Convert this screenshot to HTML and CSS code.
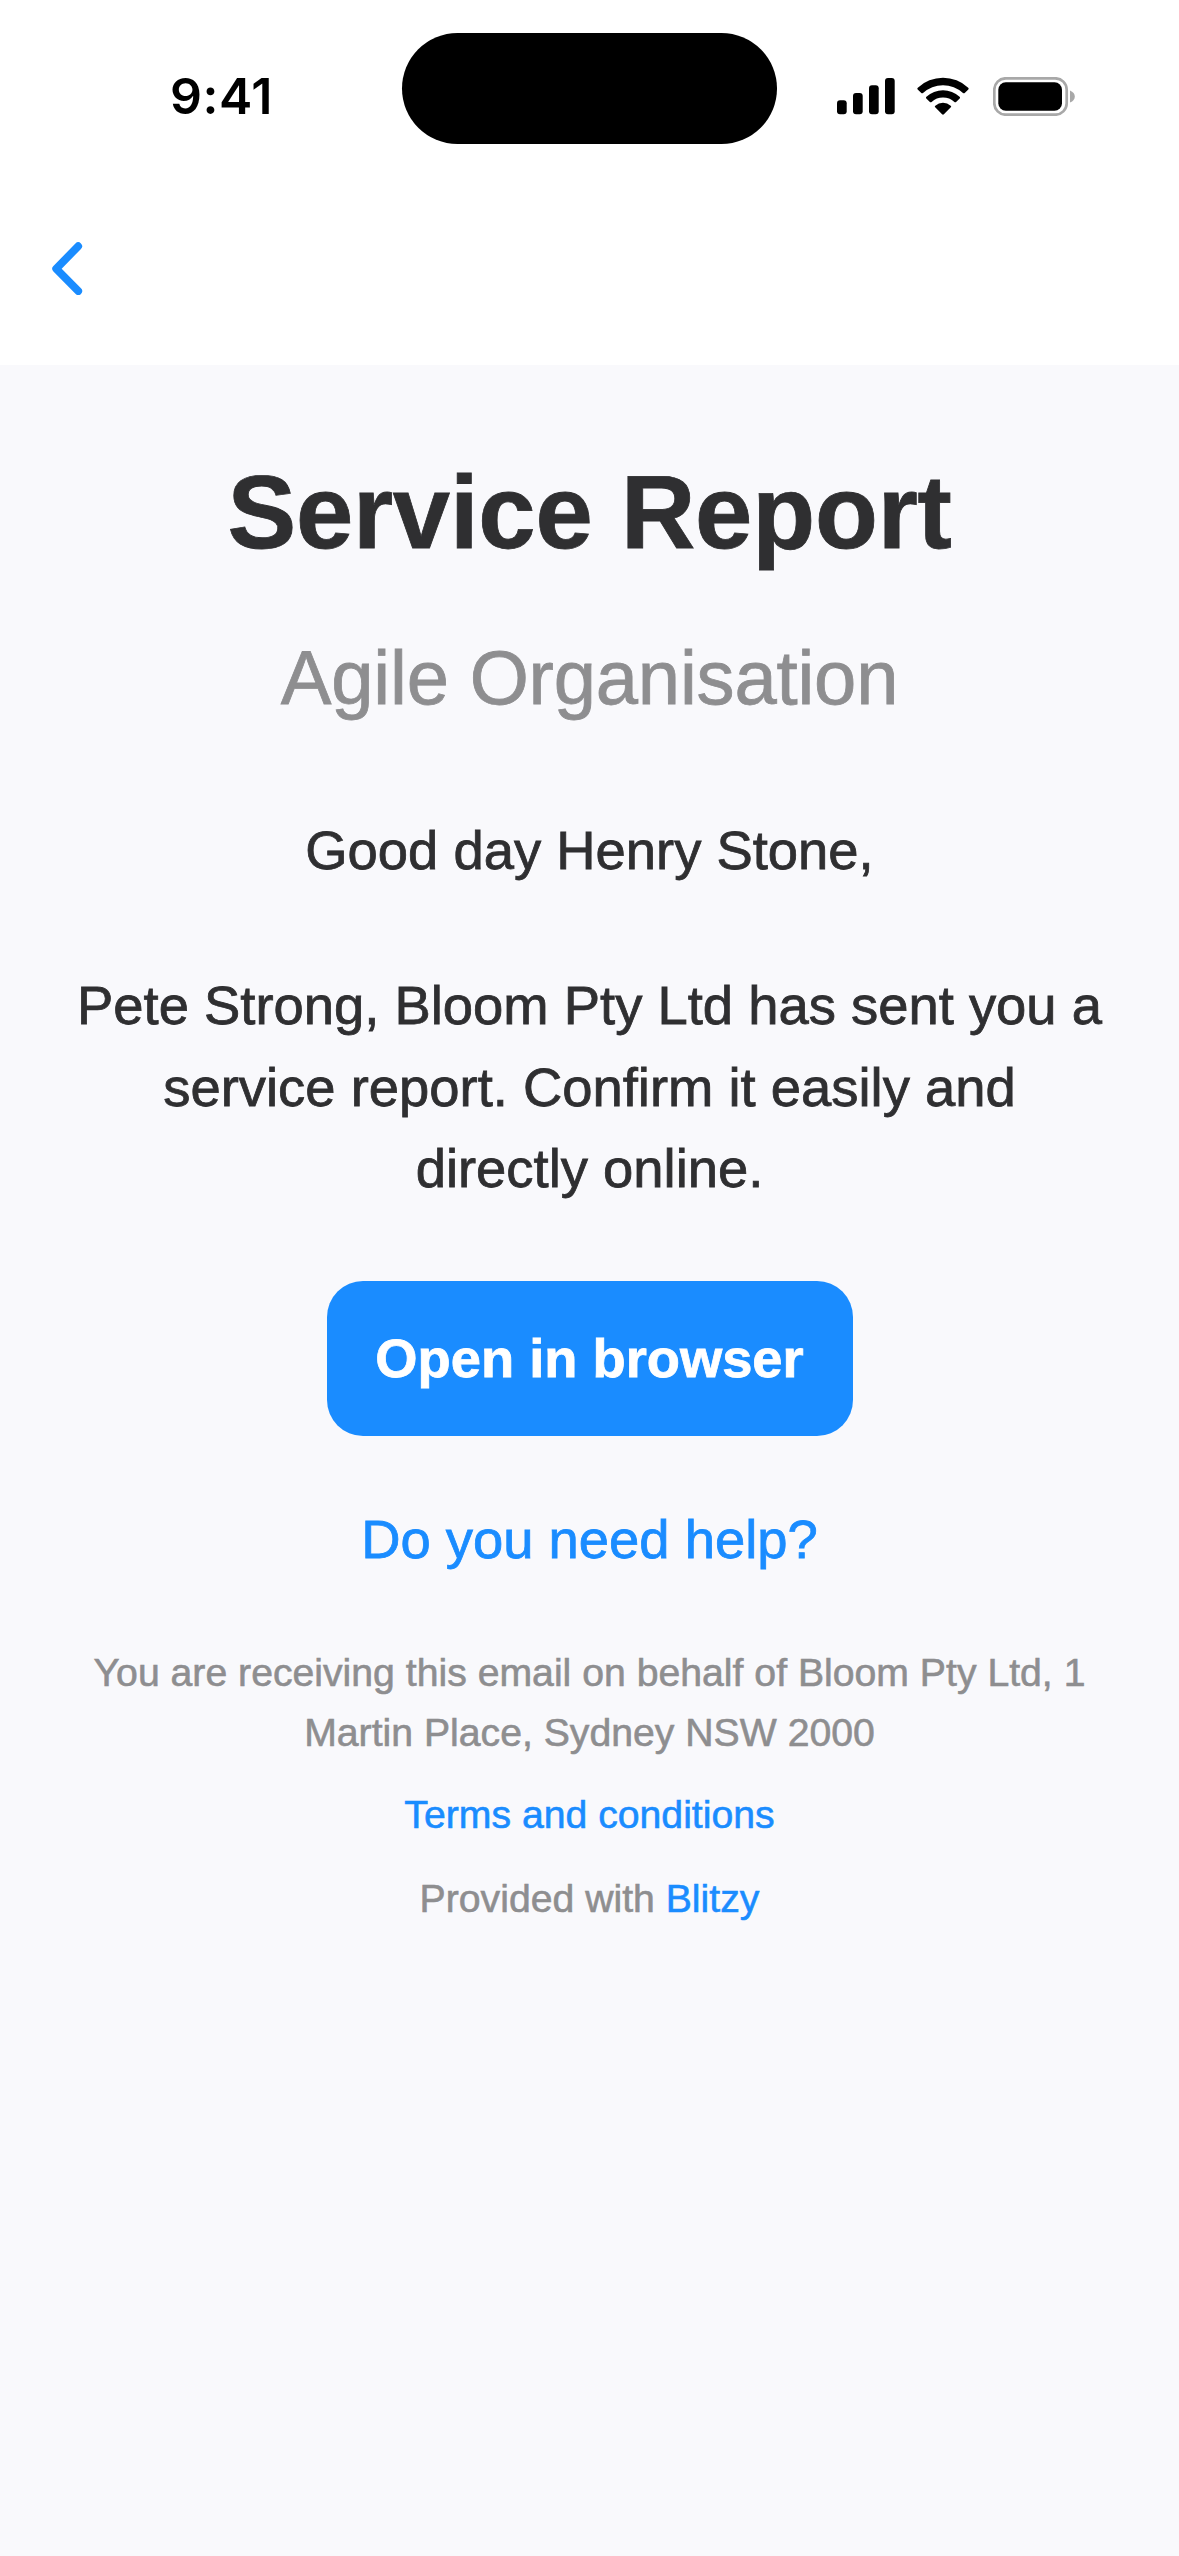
FILE: index.html
```html
<!DOCTYPE html>
<html lang="en">
<head>
<meta charset="utf-8">
<title>Service Report</title>
<link rel="stylesheet" href="styles.css">
</head>
<body>
<header class="top">
  <div class="status">
    <time class="clock">9:41</time>
    <div class="island"></div>
    <div class="indicators">
      <svg class="signal" viewBox="0 0 58 39"><rect x="0" y="23.300" width="9.700" height="14" rx="3"/><rect x="16" y="16" width="9.700" height="21.300" rx="3"/><rect x="32" y="8.300" width="9.700" height="29" rx="3"/><rect x="48" y="1" width="9.700" height="36.300" rx="3"/></svg>
      <svg class="wifi" viewBox="0 0 52 39"><path d="M.7 12.400Q-.1 11.500.8 10.700A37 37 0 0 1 51.200 10.700Q52.100 11.500 51.300 12.400L47.700 16Q46.900 16.700 46 16A29.500 29.500 0 0 0 6 16Q5.100 16.700 4.300 16ZM9.300 21.400Q8.500 20.500 9.400 19.700A24.500 24.500 0 0 1 42.600 19.700Q43.500 20.500 42.700 21.400L39.100 25Q38.300 25.700 37.400 25A16.800 16.800 0 0 0 14.600 25Q13.700 25.700 12.900 25ZM18.200 30.300Q17.400 29.500 18.300 28.700A11.800 11.800 0 0 1 33.700 28.700Q34.600 29.500 33.800 30.300L26.900 37.200Q26 38.100 25.100 37.200Z"/></svg>
      <svg class="battery" viewBox="0 0 82 39"><rect x="1.300" y="1.300" width="72.400" height="36.400" rx="11.500" fill="none" stroke="#a8a8a8" stroke-width="2.700"/><rect x="5.300" y="5.300" width="63.700" height="28.400" rx="7.500"/><path d="M77 13.500q4.800 2 4.800 6t-4.800 6z" fill="#a8a8a8"/></svg>
    </div>
  </div>
  <nav class="nav"><a class="back" href="#" aria-label="Back"><svg viewBox="0 0 32 54"><path d="M27.200 5.200 5.200 27.700l22 22.400"/></svg></a></nav>
</header>
<main class="message">
  <h1 class="title">Service Report</h1>
  <p class="org">Agile Organisation</p>
  <p class="greeting">Good day Henry Stone,</p>
  <p class="body">Pete Strong, Bloom Pty Ltd has sent you a<br>service report. Confirm it easily and<br>directly online.</p>
  <a class="button" href="#">Open in browser</a>
  <a class="help" href="#">Do you need help?</a>
  <footer class="footer">
    <p class="behalf">You are receiving this email on behalf of Bloom Pty Ltd, 1<br>Martin Place, Sydney NSW 2000</p>
    <a class="terms" href="#">Terms and conditions</a>
    <p class="provided">Provided with <a href="#">Blitzy</a></p>
  </footer>
</main>
</body>
</html>
```
FILE: styles.css
```css
* { box-sizing: border-box; }
body { margin: 0; min-height: 2556px; display: flex; flex-direction: column; background: #fff; color: #2f2f31; font-family: "Liberation Sans", Arial, sans-serif; }
p, h1 { margin: 0; }
a { color: #1a8cff; text-decoration: none; }
svg { display: block; }
.top { height: 365px; }
.status { height: 190px; display: grid; grid-template-columns: 402px 375px 402px; align-items: start; }
.clock { padding: 64px 0 0 170px; font: 600 50px/64px Inter, sans-serif; color: #000; letter-spacing: 0.5px; }
.island { height: 111px; margin-top: 33px; border-radius: 56px; background: #000; }
.indicators { display: flex; align-items: center; padding: 77px 0 0 60px; }
.signal { width: 58px; height: 39px; margin-right: 22px; }
.wifi { width: 52px; height: 39px; margin-right: 24px; }
.battery { width: 82px; height: 39px; }
.nav { padding: 51px 0 0 51px; }
.back { display: block; width: 32px; }
.back svg { width: 32px; height: 54px; fill: none; stroke: #1a8cff; stroke-width: 7.8; stroke-linecap: round; stroke-linejoin: round; }
.message { flex: 1; display: flex; flex-direction: column; align-items: center; text-align: center; white-space: nowrap; background: #f9f9fc; padding-top: 88px; -webkit-text-stroke: 0.8px currentColor; }
.title { font-size: 103px; line-height: 120px; letter-spacing: -0.2px; }
.org { margin-top: 57px; font-size: 76px; line-height: 96px; letter-spacing: -0.2px; color: #8e8e90; }
.greeting { margin-top: 84px; font-size: 54.4px; line-height: 82px; }
.body { margin-top: 73px; font-size: 54.4px; line-height: 81.7px; }
.button { margin-top: 70.5px; width: 526px; height: 155px; border-radius: 36px; background: #1a8cff; color: #fff; font-size: 54.3px; font-weight: 700; line-height: 156px; }
.help { margin-top: 63.5px; font-size: 54.4px; line-height: 82px; }
.footer { display: flex; flex-direction: column; align-items: center; margin-top: 62px; font-size: 39.2px; line-height: 60px; color: #8e8e90; -webkit-text-stroke-width: 0.6px; }
.terms { margin-top: 22px; }
.provided { margin-top: 24px; }
```
